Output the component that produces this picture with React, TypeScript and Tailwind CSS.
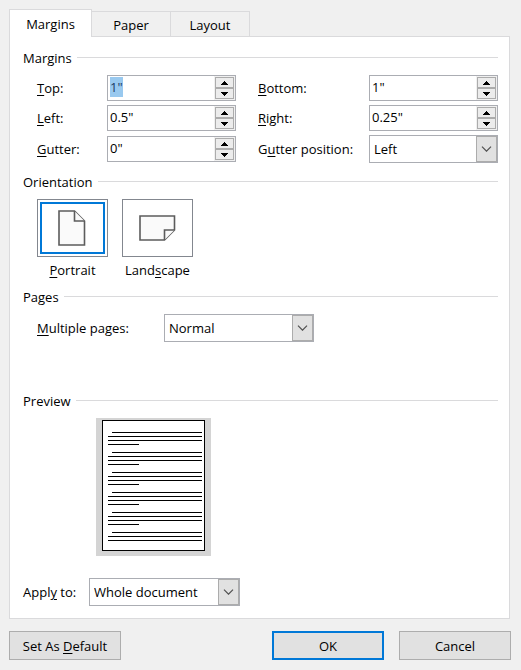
import { useEffect, useRef, useState } from "react";
import type { ReactNode, RefObject } from "react";

const mnemonic = "underline underline-offset-2";

function Section({ title, children, className = "" }: { title: string; children: ReactNode; className?: string }) {
  return (
    <section className={className}>
      <div className="flex h-5 items-center gap-[5px]">
        <h2 className="pt-0.5">{title}</h2>
        <span className="h-px flex-1 bg-[#dadadc]" />
      </div>
      <div className="pt-2">{children}</div>
    </section>
  );
}

function Spinner({ id, value, inputRef }: { id: string; value: string; inputRef?: RefObject<HTMLInputElement | null> }) {
  const [text, setText] = useState(value);
  const step = (delta: number) => {
    const next = Math.max(0, (parseFloat(text) || 0) + delta);
    setText(`${Math.round(next * 100) / 100}"`);
  };
  return (
    <div className="flex h-[26px] min-w-0 self-center border border-[#abadb3] bg-white">
      <input
        id={id}
        ref={inputRef}
        type="text"
        value={text}
        onChange={(e) => setText(e.target.value)}
        className="w-0 min-w-0 flex-1 pb-0.5 pl-0.5 outline-none selection:bg-[#99c9ef] selection:text-[#1b3a66]"
      />
      <div className="flex w-[21px] flex-col bg-[#f0f0f0] p-px">
        <button
          type="button"
          aria-label="Increase"
          onClick={() => step(0.1)}
          className="flex flex-1 items-center justify-center border border-[#acacac] bg-[#ececec]"
        >
          <svg width="7" height="4" viewBox="0 0 7 4" shapeRendering="crispEdges" aria-hidden="true">
            <path d="M3 0h1v1h1v1h1v1h1v1H0V3h1V2h1V1h1z" />
          </svg>
        </button>
        <button
          type="button"
          aria-label="Decrease"
          onClick={() => step(-0.1)}
          className="flex flex-1 items-center justify-center border border-[#acacac] bg-[#ececec]"
        >
          <svg width="7" height="4" viewBox="0 0 7 4" shapeRendering="crispEdges" aria-hidden="true">
            <path d="M3 4h1V3h1V2h1V1h1V0H0v1h1v1h1v1h1z" />
          </svg>
        </button>
      </div>
    </div>
  );
}

function DropDown({ id, options, className = "" }: { id: string; options: string[]; className?: string }) {
  return (
    <div className={`relative h-7 ${className}`}>
      <select
        id={id}
        className="h-full w-full appearance-none rounded-none border border-[#abadb3] bg-white pl-1 outline-none"
      >
        {options.map((o) => (
          <option key={o}>{o}</option>
        ))}
      </select>
      <span className="pointer-events-none absolute inset-y-px right-px flex w-[21px] items-center justify-center border border-[#acacac] bg-[#e1e1e1]">
        <svg width="11" height="6" viewBox="0 0 11 6" fill="none" stroke="#505050" strokeWidth="1.2" aria-hidden="true">
          <path d="M1 0.7L5.5 5.2L10 0.7" />
        </svg>
      </span>
    </div>
  );
}

function OrientationOption({
  value,
  checked,
  onSelect,
  icon,
  children,
}: {
  value: string;
  checked: boolean;
  onSelect: () => void;
  icon: ReactNode;
  children: ReactNode;
}) {
  return (
    <label className="flex w-[71px] flex-col items-center gap-[3px]">
      <input
        type="radio"
        name="orientation"
        value={value}
        checked={checked}
        onChange={onSelect}
        className="sr-only"
      />
      <span className="flex h-[58px] w-full border border-[#83878f] bg-white p-0.5">
        <span
          className={`flex flex-1 items-center justify-center border-2 ${checked ? "border-[#0078d7]" : "border-transparent"}`}
        >
          {icon}
        </span>
      </span>
      <span className="h-5">{children}</span>
    </label>
  );
}

function PagePreview() {
  const lines: { x: number; y: number; w: number }[] = [];
  for (let group = 0; group < 6; group++) {
    const y = 12 + group * 20;
    lines.push({ x: 10, y, w: 90 }, { x: 6, y: y + 4, w: 94 }, { x: 6, y: y + 8, w: 94 });
    if (group < 5) lines.push({ x: 6, y: y + 12, w: 31 });
  }
  return (
    <div className="ml-[73px] h-[138px] w-[115px] bg-[#d4d4d4] pt-0.5 pl-1.5">
      <svg width="103" height="131" viewBox="0 0 103 131" shapeRendering="crispEdges" role="img" aria-label="Page preview">
        <rect width="103" height="131" fill="#000" />
        <rect x="1" y="1" width="101" height="129" fill="#fff" />
        {lines.map((l) => (
          <rect key={l.y} x={l.x} y={l.y} width={l.w} height="1" fill="#000" />
        ))}
      </svg>
    </div>
  );
}

export default function App() {
  const topRef = useRef<HTMLInputElement>(null);
  const [orientation, setOrientation] = useState("portrait");

  useEffect(() => {
    topRef.current?.focus();
    topRef.current?.select();
  }, []);

  return (
    <form
      onSubmit={(e) => e.preventDefault()}
      className="min-h-screen bg-[#f0f0f0] pt-[9px] pr-2.5 pb-2.5 pl-[9px] font-['Open_Sans','Noto_Sans',sans-serif] text-[13px] leading-5 text-black"
    >
      <div role="tablist" className="flex items-end">
        <button
          type="button"
          role="tab"
          aria-selected="true"
          className="relative -mb-px h-7 w-[83px] border border-b-0 border-[#dadadc] bg-white"
        >
          Margins
        </button>
        <button
          type="button"
          role="tab"
          aria-selected="false"
          className="h-[25px] w-[79px] border-t border-r border-[#dadadc] pt-0.5"
        >
          Paper
        </button>
        <button
          type="button"
          role="tab"
          aria-selected="false"
          className="h-[25px] w-[79px] border-t border-r border-[#dadadc] pt-0.5"
        >
          Layout
        </button>
      </div>

      <main className="mr-px border border-[#dadadc] bg-white pt-2.5 pr-[11px] pb-3 pl-[13px]">
        <Section title="Margins">
          <div className="grid grid-cols-[70px_1fr_133px_1fr] gap-y-1 pl-3.5">
            <label htmlFor="top" className="self-center">
              <span className={mnemonic}>T</span>op:
            </label>
            <Spinner id="top" value={'1"'} inputRef={topRef} />
            <label htmlFor="bottom" className="self-center pl-[22px]">
              <span className={mnemonic}>B</span>ottom:
            </label>
            <Spinner id="bottom" value={'1"'} />
            <label htmlFor="left" className="self-center">
              <span className={mnemonic}>L</span>eft:
            </label>
            <Spinner id="left" value={'0.5"'} />
            <label htmlFor="right" className="self-center pl-[22px]">
              <span className={mnemonic}>R</span>ight:
            </label>
            <Spinner id="right" value={'0.25"'} />
            <label htmlFor="gutter" className="self-center">
              <span className={mnemonic}>G</span>utter:
            </label>
            <Spinner id="gutter" value={'0"'} />
            <label htmlFor="gutter-position" className="self-center pl-[22px]">
              G<span className={mnemonic}>u</span>tter position:
            </label>
            <DropDown id="gutter-position" options={["Left", "Top"]} />
          </div>
        </Section>

        <Section title="Orientation" className="mt-2">
          <div role="radiogroup" aria-label="Orientation" className="flex gap-3.5 pl-3.5">
            <OrientationOption
              value="portrait"
              checked={orientation === "portrait"}
              onSelect={() => setOrientation("portrait")}
              icon={
                <svg width="29" height="36" viewBox="0 0 29 36" fill="#fafafa" stroke="#5c5c5c" strokeWidth="1.6" aria-hidden="true">
                  <path d="M1 1H16.5L26.5 11V35H1Z" />
                  <path d="M16.5 1V11H26.5" />
                </svg>
              }
            >
              <span className={mnemonic}>P</span>ortrait
            </OrientationOption>
            <OrientationOption
              value="landscape"
              checked={orientation === "landscape"}
              onSelect={() => setOrientation("landscape")}
              icon={
                <svg width="38" height="26" viewBox="0 0 38 26" fill="#fafafa" stroke="#5c5c5c" strokeWidth="1.6" aria-hidden="true">
                  <path d="M1 1H35.5V15L25.5 25H1Z" />
                  <path d="M25.5 25V15H35.5" />
                </svg>
              }
            >
              Land<span className={mnemonic}>s</span>cape
            </OrientationOption>
          </div>
        </Section>

        <Section title="Pages" className="mt-1.5">
          <div className="flex items-center pl-3.5">
            <label htmlFor="multiple-pages" className="w-[127px]">
              <span className={mnemonic}>M</span>ultiple pages:
            </label>
            <DropDown
              id="multiple-pages"
              options={["Normal", "Mirror margins", "2 pages per sheet", "Book fold"]}
              className="w-[150px]"
            />
          </div>
        </Section>

        <Section title="Preview" className="mt-12">
          <PagePreview />
        </Section>

        <div className="mt-[22px] flex items-center">
          <label htmlFor="apply-to" className="w-[66px]">
            Appl<span className={mnemonic}>y</span> to:
          </label>
          <DropDown id="apply-to" options={["Whole document", "This point forward"]} className="w-[151px]" />
        </div>
      </main>

      <div className="mt-3 flex">
        <button type="button" className="h-[29px] w-28 border border-[#adadad] bg-[#e1e1e1]">
          Set As <span className={mnemonic}>D</span>efault
        </button>
        <button type="submit" className="ml-auto h-[29px] w-28 border-2 border-[#0078d7] bg-[#e1e1e1]">
          OK
        </button>
        <button type="button" className="ml-[15px] h-[29px] w-28 border border-[#adadad] bg-[#e1e1e1]">
          Cancel
        </button>
      </div>
    </form>
  );
}
